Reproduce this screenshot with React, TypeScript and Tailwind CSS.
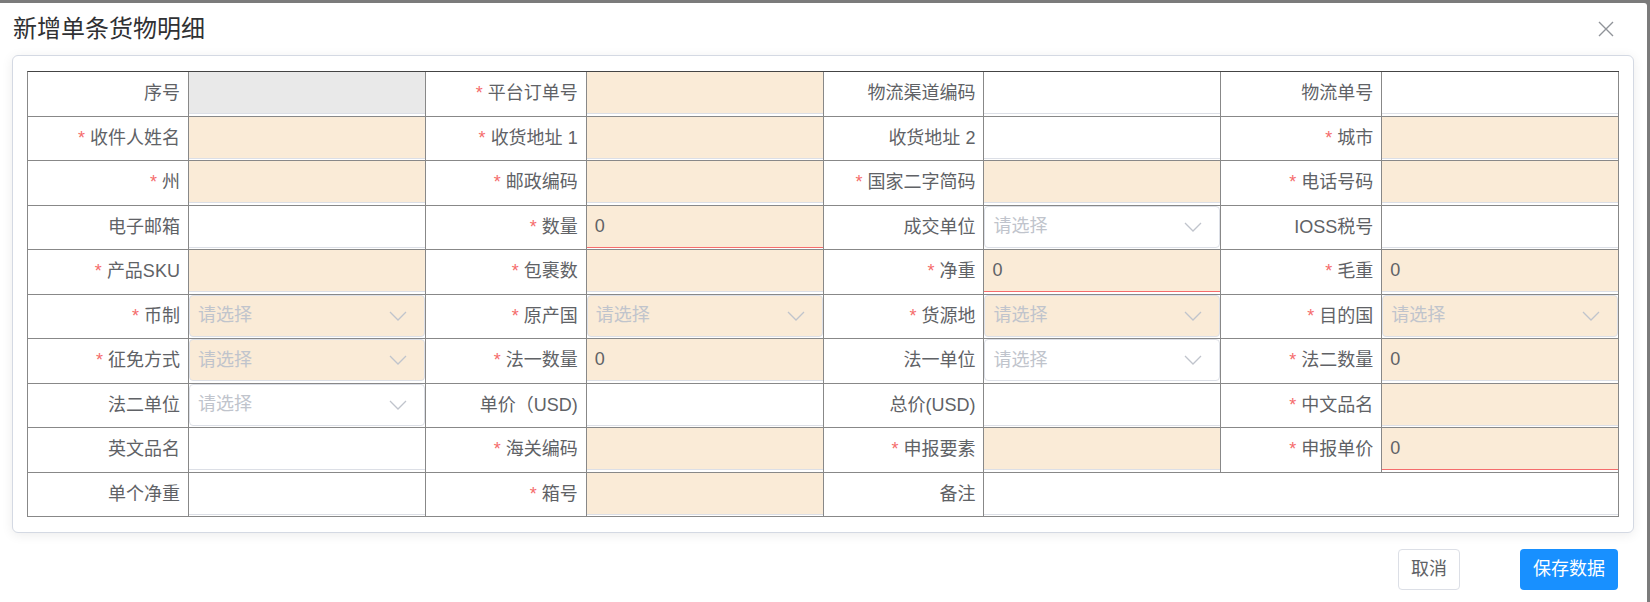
type Field = {
  label: string
  required?: boolean
  kind: "input" | "select" | "disabled"
  filled?: boolean
  value?: string
  invalid?: boolean
  wide?: boolean
}

const rows: Field[][] = [
  [
    { label: "序号", kind: "disabled" },
    { label: "平台订单号", required: true, kind: "input", filled: true },
    { label: "物流渠道编码", kind: "input" },
    { label: "物流单号", kind: "input" },
  ],
  [
    { label: "收件人姓名", required: true, kind: "input", filled: true },
    { label: "收货地址 1", required: true, kind: "input", filled: true },
    { label: "收货地址 2", kind: "input" },
    { label: "城市", required: true, kind: "input", filled: true },
  ],
  [
    { label: "州", required: true, kind: "input", filled: true },
    { label: "邮政编码", required: true, kind: "input", filled: true },
    { label: "国家二字简码", required: true, kind: "input", filled: true },
    { label: "电话号码", required: true, kind: "input", filled: true },
  ],
  [
    { label: "电子邮箱", kind: "input" },
    { label: "数量", required: true, kind: "input", filled: true, value: "0", invalid: true },
    { label: "成交单位", kind: "select" },
    { label: "IOSS税号", kind: "input" },
  ],
  [
    { label: "产品SKU", required: true, kind: "input", filled: true },
    { label: "包裹数", required: true, kind: "input", filled: true },
    { label: "净重", required: true, kind: "input", filled: true, value: "0", invalid: true },
    { label: "毛重", required: true, kind: "input", filled: true, value: "0" },
  ],
  [
    { label: "币制", required: true, kind: "select", filled: true },
    { label: "原产国", required: true, kind: "select", filled: true },
    { label: "货源地", required: true, kind: "select", filled: true },
    { label: "目的国", required: true, kind: "select", filled: true },
  ],
  [
    { label: "征免方式", required: true, kind: "select", filled: true },
    { label: "法一数量", required: true, kind: "input", filled: true, value: "0" },
    { label: "法一单位", kind: "select" },
    { label: "法二数量", required: true, kind: "input", filled: true, value: "0" },
  ],
  [
    { label: "法二单位", kind: "select" },
    { label: "单价（USD)", kind: "input" },
    { label: "总价(USD)", kind: "input" },
    { label: "中文品名", required: true, kind: "input", filled: true },
  ],
  [
    { label: "英文品名", kind: "input" },
    { label: "海关编码", required: true, kind: "input", filled: true },
    { label: "申报要素", required: true, kind: "input", filled: true },
    { label: "申报单价", required: true, kind: "input", filled: true, value: "0", invalid: true },
  ],
  [
    { label: "单个净重", kind: "input" },
    { label: "箱号", required: true, kind: "input", filled: true },
    { label: "备注", kind: "input", wide: true },
  ],
]

function Control({ field }: { field: Field }) {
  if (field.kind === "select") {
    return (
      <div
        className={`h-[42px] w-full rounded-[4px] border border-[#dcdfe6] flex items-center justify-between pl-[8px] pr-[17px] ${
          field.filled ? "bg-[#faebd7]" : "bg-white"
        }`}
      >
        <span className="text-[#c0c4cc]">请选择</span>
        <svg width="18" height="10" viewBox="0 0 18 10" className="text-[#c0c4cc]">
          <path d="M1 1L9 9L17 1" fill="none" stroke="currentColor" strokeWidth="1.3" />
        </svg>
      </div>
    )
  }
  const bg = field.kind === "disabled" ? "bg-[#e9e9e9]" : field.filled ? "bg-[#faebd7]" : "bg-white"
  return (
    <div
      className={`h-[42px] w-full border-b flex items-center px-[8px] text-[#606266] ${bg} ${
        field.invalid ? "border-[#f56c6c]" : "border-[#dcdfe6]"
      }`}
    >
      {field.value}
    </div>
  )
}

export default function App() {
  return (
    <div
      className="h-[602px] w-[1650px] overflow-hidden bg-[#7b7b7b] pt-[3px] pr-[3px]"
      style={{ fontFamily: '"Liberation Sans", "Noto Sans CJK SC", sans-serif' }}
    >
      <div className="h-full bg-white rounded-tr-[3px]">
        <div className="h-[52px] flex items-center justify-between pl-[13px] pr-[33px]">
          <span className="text-[24px] text-[#303133]">新增单条货物明细</span>
          <svg width="16" height="16" viewBox="0 0 16 16" className="text-[#909399]">
            <path d="M1 1L15 15M15 1L1 15" stroke="currentColor" strokeWidth="1.4" />
          </svg>
        </div>

        <div className="ml-[12px] mr-[13px] rounded-[6px] border border-[#d4d9e3] bg-white px-[14px] py-[15px] shadow-[0_2px_12px_rgba(0,0,0,0.08)]">
          <div className="grid grid-cols-[161fr_237fr_161fr_237fr_161fr_237fr_161fr_237fr] border-l border-t border-l-[#888] border-t-[#444] text-[18px]">
            {rows.map((row, ri) =>
              row.map((field, fi) => [
                <div
                  key={`l-${ri}-${fi}`}
                  className="h-[44.5px] border-r border-b border-[#888] flex items-center justify-end pr-[8px] text-[#606266] whitespace-nowrap"
                >
                  {field.required && <span className="text-[#f56c6c] mr-[5px]">*</span>}
                  {field.label}
                </div>,
                <div
                  key={`c-${ri}-${fi}`}
                  className={`h-[44.5px] border-r border-b border-[#888] flex items-start ${
                    field.wide ? "col-span-3" : ""
                  }`}
                >
                  <Control field={field} />
                </div>,
              ])
            )}
          </div>
        </div>

        <div className="flex justify-end items-center gap-[60px] mt-[16px] pr-[29px]">
          <button className="h-[41px] w-[62px] rounded-[4px] border border-[#dcdfe6] bg-white text-[18px] text-[#606266]">
            取消
          </button>
          <button className="h-[41px] w-[98px] rounded-[4px] bg-[#1890ff] text-[18px] text-white">
            保存数据
          </button>
        </div>
      </div>
    </div>
  )
}
